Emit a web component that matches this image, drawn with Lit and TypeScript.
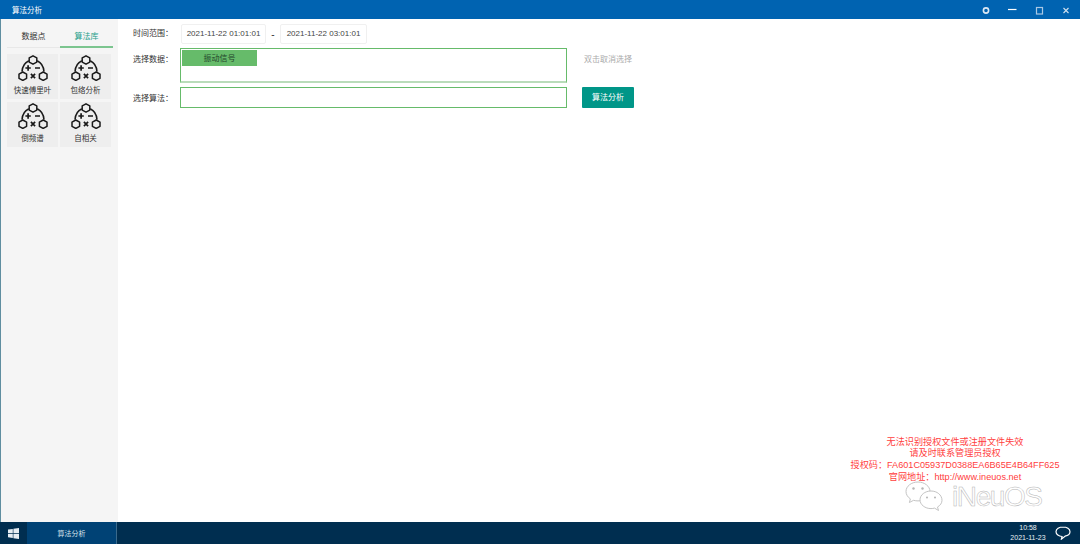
import { LitElement, html, css, svg } from "lit";
import { customElement } from "lit/decorators.js";

const algoIcon = svg`
  <svg class="algo" viewBox="0 0 30 26" width="30" height="26" fill="none" stroke="#1a1a1a" stroke-width="1.5" stroke-linejoin="round">
    <polygon points="15,.8 18.800,2.900 18.800,7.100 15,9.200 11.200,7.100 11.200,2.900" />
    <polygon points="4.800,17 8.600,19.100 8.600,23.300 4.800,25.400 1,23.300 1,19.100" />
    <polygon points="25.200,17 29,19.100 29,23.300 25.200,25.400 21.400,23.300 21.400,19.100" />
    <path d="M10.800 5.800C7 7.600 4.400 11.400 4 16.600" />
    <path d="M19.200 5.800C23 7.600 25.600 11.400 26 16.600" />
    <path d="M7.400 13h5.400M10.100 10.300v5.400M17 13h5" stroke-width="1.700" />
    <path d="M12.900 18.900l4.200 4.200M17.100 18.900l-4.200 4.200" stroke-width="1.700" />
  </svg>`;

@customElement("app-root")
export class AppRoot extends LitElement {
  static styles = css`
    :host {
      display: flex;
      flex-direction: column;
      position: relative;
      width: 1080px;
      height: 544px;
      overflow: hidden;
      background: #fff;
      font-family: "Liberation Sans", "Noto Sans CJK SC", sans-serif;
      font-size: 8px;
      color: #333;
    }

    .titlebar {
      flex: none;
      height: 19px;
      background: #0063b1;
      color: #fff;
      display: flex;
      align-items: center;
      padding-left: 12px;
      font-size: 7.5px;
    }
    .winctrl {
      margin-left: auto;
      display: flex;
      align-items: center;
    }
    .winctrl svg {
      display: block;
      width: 27px;
      height: 19px;
    }

    .body {
      flex: 1;
      display: flex;
      min-height: 0;
    }

    .side {
      flex: none;
      width: 118px;
      border-left: 1px solid #5f8ea0;
      background: #f5f5f5;
      box-sizing: border-box;
      padding: 0 5px 0 6px;
    }
    .tabs {
      display: grid;
      grid-template-columns: 53px 53px;
      height: 29px;
    }
    .tab {
      display: flex;
      align-items: center;
      justify-content: center;
      border-bottom: 1px solid #e8e8e8;
      padding-top: 5px;
      box-sizing: border-box;
    }
    .tab.on {
      color: #1f9e8b;
      border-bottom: 2px solid #7cc58f;
    }
    .tiles {
      display: grid;
      grid-template-columns: 51px 51px;
      grid-auto-rows: 45px;
      column-gap: 2px;
      row-gap: 3px;
      margin-top: 6px;
    }
    .tile {
      background: #eeeeee;
      display: flex;
      flex-direction: column;
      align-items: center;
      padding-top: 1px;
      box-sizing: border-box;
      color: #333;
      font-size: 7.5px;
    }
    .algo {
      display: block;
      flex: none;
    }
    .tile span {
      margin-top: 4px;
      line-height: 11px;
    }

    .main {
      flex: 1;
      padding: 5px 0 0 15px;
      min-width: 0;
    }
    .row {
      display: flex;
    }
    .label {
      flex: none;
      width: 47px;
      line-height: 20px;
    }
    .data-row .label,
    .data-row .hint,
    .algo-row .label {
      padding-top: 2px;
    }
    .time-row {
      height: 20px;
      align-items: center;
    }
    .date {
      width: 85px;
      height: 20px;
      box-sizing: border-box;
      border: 1px solid #f0f0f0;
      border-radius: 2px;
      line-height: 18px;
      text-align: center;
      color: #444;
      margin-left: 1px;
    }
    .date + .dash {
      width: 14px;
      text-align: center;
      font-size: 10px;
    }
    .dash + .date {
      width: 87px;
      margin-left: 0;
    }
    .data-row {
      margin-top: 4px;
    }
    .data-box {
      width: 387px;
      height: 35px;
      box-sizing: border-box;
      border: 1px solid #66bb6a;
      border-bottom-color: #b9dcba;
      border-bottom-width: 2px;
      padding: 1px;
    }
    .tag {
      width: 75px;
      height: 16px;
      background: #66bb6a;
      color: #24452a;
      line-height: 17px;
      text-align: center;
    }
    .hint {
      margin-left: 17px;
      color: #aaa;
      line-height: 20px;
    }
    .algo-row {
      margin-top: 4px;
    }
    .algo-box {
      width: 387px;
      height: 21px;
      box-sizing: border-box;
      border: 1px solid #66bb6a;
    }
    .run {
      width: 52px;
      height: 21px;
      margin-left: 15px;
      background: #009688;
      color: #fff;
      border-radius: 1px;
      line-height: 21px;
      text-align: center;
    }

    .taskbar {
      flex: none;
      height: 22px;
      background: #002e50;
      color: #fff;
      display: flex;
      align-items: stretch;
    }
    .start {
      width: 27px;
      display: flex;
      align-items: center;
      justify-content: center;
    }
    .task {
      width: 89px;
      background: #004275;
      border-right: 1px solid #3a6a8c;
      display: flex;
      align-items: center;
      justify-content: center;
      color: #d6e2ec;
      font-size: 7px;
    }
    .clock {
      margin-left: auto;
      width: 36px;
      text-align: center;
      font-size: 7px;
      line-height: 10px;
      padding-top: 1px;
      color: #e8eef3;
      white-space: nowrap;
    }
    .msg {
      width: 34px;
      display: flex;
      align-items: center;
      justify-content: center;
    }

    /* overlay that sits on top of the page */
    .license {
      position: absolute;
      left: 830px;
      width: 250px;
      top: 436.500px;
      color: #ff4040;
      font-size: 9.15px;
      line-height: 11.8px;
      text-align: center;
    }
    .mark {
      position: absolute;
      left: 905px;
      top: 481px;
      display: flex;
      align-items: center;
    }
    .mark svg {
      display: block;
    }
    .mark span {
      font-family: "Liberation Sans", sans-serif;
      font-size: 28px;
      line-height: 32px;
      letter-spacing: -1.4px;
      margin-left: 7px;
      color: #fff;
      -webkit-text-stroke: 0.5px #b5b5b5;
    }
  `;

  render() {
    const tiles = ["快速傅里叶", "包络分析", "倒频谱", "自相关"];
    return html`
      <div class="titlebar">
        算法分析
        <div class="winctrl">
          <svg viewBox="0 0 27 19" fill="none" stroke="#dbe8f4" stroke-width="1.6"><circle cx="14" cy="10.500" r="2.6" /></svg>
          <svg viewBox="0 0 27 19" fill="none" stroke="#fff" stroke-width="1.2"><path d="M9 9.5h8.5" /></svg>
          <svg viewBox="0 0 27 19" fill="none" stroke="#a9c8e4" stroke-width="1.2"><rect x="10.5" y="7.500" width="6" height="6.5" /></svg>
          <svg viewBox="0 0 27 19" fill="none" stroke="#cfe0ef" stroke-width="1.1"><path d="M10.500 8l5 5M15.500 8l-5 5" /></svg>
        </div>
      </div>

      <div class="body">
        <div class="side">
          <div class="tabs">
            <div class="tab">数据点</div>
            <div class="tab on">算法库</div>
          </div>
          <div class="tiles">
            ${tiles.map((t) => html`<div class="tile">${algoIcon}<span>${t}</span></div>`)}
          </div>
        </div>

        <div class="main">
          <div class="row time-row">
            <div class="label">时间范围：</div>
            <div class="date">2021-11-22 01:01:01</div>
            <div class="dash">-</div>
            <div class="date">2021-11-22 03:01:01</div>
          </div>
          <div class="row data-row">
            <div class="label">选择数据：</div>
            <div class="data-box"><div class="tag">振动信号</div></div>
            <div class="hint">双击取消选择</div>
          </div>
          <div class="row algo-row">
            <div class="label">选择算法：</div>
            <div class="algo-box"></div>
            <div class="run">算法分析</div>
          </div>
        </div>
      </div>

      <div class="taskbar">
        <div class="start">
          <svg width="11" height="11" viewBox="0 0 11 11" fill="#e6edf3">
            <path d="M0 1.6l4.8-.7v4.2H0zM5.4.8L11 0v5.1H5.4zM0 5.8h4.8V10L0 9.3zM5.4 5.8H11V11l-5.6-.8z" />
          </svg>
        </div>
        <div class="task">算法分析</div>
        <div class="clock">10:58<br />2021-11-23</div>
        <div class="msg">
          <svg width="16" height="14" viewBox="0 0 16 14" fill="none" stroke="#fff" stroke-width="1.2">
            <path d="M8 1C4.2 1 1 3 1 5.800c0 2.600 2.800 4.600 6 4.700l-.6 2.600 3.600-2.900c2.900-.5 5-2.300 5-4.400C15 3 11.800 1 8 1z" />
          </svg>
        </div>
      </div>

      <div class="license">
        无法识别授权文件或注册文件失效<br />
        请及时联系管理员授权<br />
        授权码：FA601C05937D0388EA6B65E4B64FF625<br />
        官网地址：http://www.ineuos.net
      </div>
      <div class="mark">
        <svg width="40" height="32" viewBox="0 0 40 32" fill="#fff" stroke="#c4c4c4" stroke-width="1">
          <path d="M13 1C6.400 1 1 5.200 1 10.500c0 3 1.700 5.600 4.400 7.400l-1 3.600 4.200-2.200c1.400.4 2.900.6 4.400.6 6.600 0 12-4.200 12-9.400S19.600 1 13 1z" />
          <path d="M26 10c-6 0-11 3.900-11 8.800s5 8.800 11 8.800c1.200 0 2.400-.2 3.500-.5l4 2.400-1-3.500c2.800-1.600 4.500-4 4.500-6.700C37 14 32 10 26 10z" />
          <circle cx="8.500" cy="7.500" r="1.200" fill="#b5b5b5" stroke="none" />
          <circle cx="17.500" cy="7.500" r="1.200" fill="#b5b5b5" stroke="none" />
          <circle cx="22" cy="16.500" r="1" fill="#b5b5b5" stroke="none" />
          <circle cx="30" cy="16.500" r="1" fill="#b5b5b5" stroke="none" />
        </svg>
        <span>iNeuOS</span>
      </div>
    `;
  }
}
